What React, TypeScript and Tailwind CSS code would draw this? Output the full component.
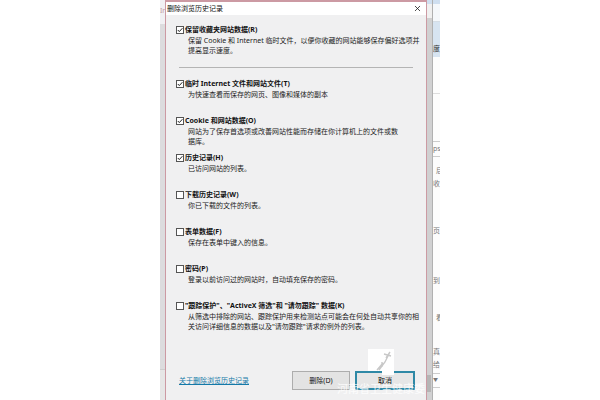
import { useState } from "react";
import { X } from "lucide-react";

type Option = {
  id: string;
  label: string;
  lines: string[];
  checked: boolean;
};

const favorites: Option = {
  id: "favorites",
  label: "保留收藏夹网站数据(R)",
  lines: ["保留 Cookie 和 Internet 临时文件，以便你收藏的网站能够保存偏好选项并", "提高显示速度。"],
  checked: true,
};

const options: Option[] = [
  {
    id: "temp",
    label: "临时 Internet 文件和网站文件(T)",
    lines: ["为快速查看而保存的网页、图像和媒体的副本"],
    checked: true,
  },
  {
    id: "cookies",
    label: "Cookie 和网站数据(O)",
    lines: ["网站为了保存首选项或改善网站性能而存储在你计算机上的文件或数", "据库。"],
    checked: true,
  },
  { id: "history", label: "历史记录(H)", lines: ["已访问网站的列表。"], checked: true },
  { id: "downloads", label: "下载历史记录(W)", lines: ["你已下载的文件的列表。"], checked: false },
  { id: "forms", label: "表单数据(F)", lines: ["保存在表单中键入的信息。"], checked: false },
  {
    id: "passwords",
    label: "密码(P)",
    lines: ["登录以前访问过的网站时，自动填充保存的密码。"],
    checked: false,
  },
  {
    id: "tracking",
    label: "\"跟踪保护\"、\"ActiveX 筛选\"和 \"请勿跟踪\" 数据(K)",
    lines: ["从筛选中排除的网站、跟踪保护用来检测站点可能会在何处自动共享你的相", "关访问详细信息的数据以及\"请勿跟踪\"请求的例外的列表。"],
    checked: false,
  },
];

function OptionRow({ option }: { option: Option }) {
  const [checked, setChecked] = useState(option.checked);

  return (
    <div className="h-[37px]">
      <label htmlFor={option.id} className="flex items-center h-3 gap-px font-bold whitespace-nowrap">
        <span className="grid shrink-0 size-2">
          <input
            id={option.id}
            type="checkbox"
            checked={checked}
            onChange={(e) => setChecked(e.target.checked)}
            aria-describedby={`${option.id}-text`}
            className="col-start-1 row-start-1 appearance-none size-2 border border-[#555] bg-white"
          />
          {checked && (
            <svg className="col-start-1 row-start-1 size-2 pointer-events-none" viewBox="0 0 8 8" fill="none">
              <path d="M1.8 4L3.3 5.6L6.4 2.2" stroke="#222" strokeWidth="1" />
            </svg>
          )}
        </span>
        {option.label}
      </label>
      <div id={`${option.id}-text`} className="pl-3 leading-[10px] whitespace-nowrap text-[#222]">
        {option.lines.map((line) => (
          <p key={line}>{line}</p>
        ))}
      </div>
    </div>
  );
}

// The sliver of the window that shows to the right of the dialog
function WindowBehind() {
  return (
    <div className="flex flex-col w-[7px] shrink-0 overflow-hidden whitespace-nowrap bg-[#fcfcfc] text-[#777]">
      <div className="h-1 bg-[#cfdff0]" />
      <div className="h-[18px] bg-[#f5f8fb] border-b border-[#d5dde5]" />
      <div className="h-[35px] pt-[22px] bg-[#d7e4f1] text-[#333]">度</div>
      <div className="h-[37px] border-b border-[#ddd]" />
      <div className="h-[48px] border-b border-[#ccc]" />
      <div className="h-[15px] border-b border-[#ccc] leading-[14px]">ps</div>
      <div className="h-[10px] mt-[9px] pl-[3px]">后</div>
      <div className="h-[47px] mt-[3px]">收</div>
      <div className="h-[50px]">页</div>
      <div className="h-[37px]">到</div>
      <div className="h-[34px] pl-[3px]">看</div>
      <div className="h-[13px]">真</div>
      <div className="h-[13px]">给</div>
      <div className="h-[15px] border-y border-[#ccc] text-[5px]">▼</div>
    </div>
  );
}

export default function App() {
  return (
    <div className="flex justify-center h-screen overflow-hidden bg-white text-[#111] text-[7px] leading-[10px] font-['Noto_Sans','Noto_Sans_CJK_SC',sans-serif]">
      <div className="flex flex-col w-[5px] shrink-0 overflow-hidden bg-[#dcdcde] text-[#c49a9f]">
        <div className="h-6 pt-[6px] bg-[#f1f1f4]">Ir</div>
        <div className="mt-auto h-[31px] border-t border-[#cdcdcd] bg-[#e6e6e6]" />
      </div>
      <main className="relative flex flex-col w-[262px] shrink-0 bg-[#f0f0f1] border-x border-t-2 border-[#cc9aa3]">
        <header className="flex items-center justify-between h-[13px] pl-px pr-[4px] bg-white">
          <h1>删除浏览历史记录</h1>
          <button type="button" aria-label="关闭">
            <X className="size-[9px]" strokeWidth={2} />
          </button>
        </header>

        <div className="pt-[9px] pl-[10px]">
          <OptionRow option={favorites} />
          <hr className="mt-[6px] mb-[10px] ml-[3px] mr-[13px] border-[#b4b4b4]" />
          {options.map((option) => (
            <OptionRow key={option.id} option={option} />
          ))}
        </div>

        <footer className="flex items-center mt-auto mb-[10px] h-[19px] pl-[13px] pr-[11px]">
          <a href="#about" className="mr-auto text-[#1479a8] underline">
            关于删除浏览历史记录
          </a>
          <button type="button" className="w-[58px] h-[19px] mr-[5px] bg-[#e3e3e3] border border-[#adadad]">
            删除(D)
          </button>
          <button type="button" className="w-[60px] h-[19px] bg-[#e6e6e6] border-2 border-[#2f89a6]">
            取消
          </button>
        </footer>

        {/* Watermark over the buttons */}
        <svg className="absolute right-[32px] bottom-[25px] w-[26px] h-[26px] pointer-events-none" viewBox="0 0 26 26" fill="none">
          <path d="M0 0H26V26H14V22H0Z" fill="#fff" />
          <path d="M9 21L15 14M11 21L17 13L21 5M14 18V13M16 5L23 7M18 9L22 3" stroke="#c8c8c8" strokeWidth="1.4" />
        </svg>
        <p className="absolute right-[1px] bottom-[4px] text-[11px] leading-[14px] whitespace-nowrap text-white/80 pointer-events-none">
          河南省卫生健康委
        </p>
      </main>
      <div className="flex flex-col w-[6px] shrink-0 bg-[#d0d0d1] border-r border-[#b0b0b0]">
        <div className="h-1 bg-[#cfdff0]" />
        <div className="h-[14px] bg-[#f0f0f0]" />
        <div className="mt-auto mb-[8px] mr-px h-[17px] bg-[#b5b5b5]" />
      </div>
      <WindowBehind />
    </div>
  );
}
